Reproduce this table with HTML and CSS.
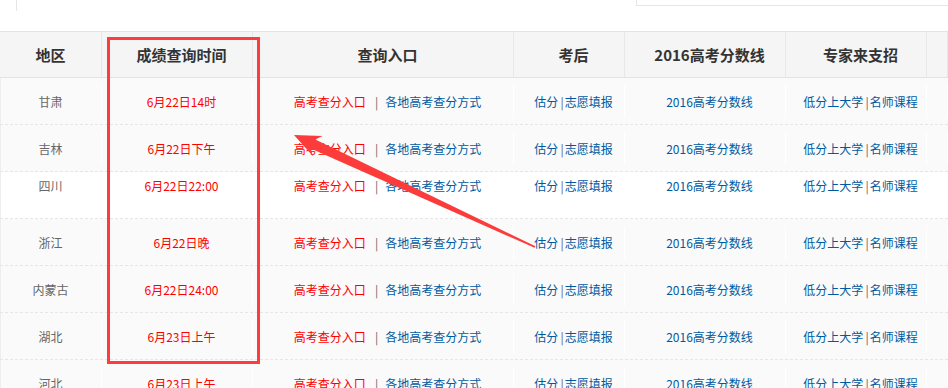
FILE: index.html
```html
<!DOCTYPE html>
<html lang="zh-CN">
<head>
<meta charset="utf-8">
<title>高考成绩查询时间</title>
<link rel="stylesheet" href="styles.css">
</head>
<body>
<div class="page">
  <div class="topbar">
    <span class="edge edge-left"></span>
    <span class="edge edge-right"></span>
  </div>

  <div class="score-table">
    <div class="row head">
      <div class="cell">地区</div>
      <div class="cell">成绩查询时间</div>
      <div class="cell">查询入口</div>
      <div class="cell">考后</div>
      <div class="cell">2016高考分数线</div>
      <div class="cell">专家来支招</div>
      <div class="cell"></div>
    </div>

    <div class="row boxed">
      <div class="cell"><div class="in area">甘肃</div></div>
      <div class="cell"><div class="in red">6月22日14时</div></div>
      <div class="cell"><div class="in"><a class="red">高考查分入口</a><span class="sep wide">|</span><a>各地高考查分方式</a></div></div>
      <div class="cell"><div class="in"><a>估分</a><span class="sep">|</span><a>志愿填报</a></div></div>
      <div class="cell"><div class="in"><a>2016高考分数线</a></div></div>
      <div class="cell"><div class="in"><a>低分上大学</a><span class="sep">|</span><a>名师课程</a></div></div>
      <div class="cell"><div class="in"></div></div>
    </div>

    <div class="row boxed">
      <div class="cell"><div class="in area">吉林</div></div>
      <div class="cell"><div class="in red">6月22日下午</div></div>
      <div class="cell"><div class="in"><a class="red">高考查分入口</a><span class="sep wide">|</span><a>各地高考查分方式</a></div></div>
      <div class="cell"><div class="in"><a>估分</a><span class="sep">|</span><a>志愿填报</a></div></div>
      <div class="cell"><div class="in"><a>2016高考分数线</a></div></div>
      <div class="cell"><div class="in"><a>低分上大学</a><span class="sep">|</span><a>名师课程</a></div></div>
      <div class="cell"><div class="in"></div></div>
    </div>

    <div class="row plain">
      <div class="cell"><div class="in area">四川</div></div>
      <div class="cell"><div class="in red">6月22日22:00</div></div>
      <div class="cell"><div class="in"><a class="red">高考查分入口</a><span class="sep wide">|</span><a>各地高考查分方式</a></div></div>
      <div class="cell"><div class="in"><a>估分</a><span class="sep">|</span><a>志愿填报</a></div></div>
      <div class="cell"><div class="in"><a>2016高考分数线</a></div></div>
      <div class="cell"><div class="in"><a>低分上大学</a><span class="sep">|</span><a>名师课程</a></div></div>
      <div class="cell"><div class="in"></div></div>
    </div>

    <div class="row boxed">
      <div class="cell"><div class="in area">浙江</div></div>
      <div class="cell"><div class="in red">6月22日晚</div></div>
      <div class="cell"><div class="in"><a class="red">高考查分入口</a><span class="sep wide">|</span><a>各地高考查分方式</a></div></div>
      <div class="cell"><div class="in"><a>估分</a><span class="sep">|</span><a>志愿填报</a></div></div>
      <div class="cell"><div class="in"><a>2016高考分数线</a></div></div>
      <div class="cell"><div class="in"><a>低分上大学</a><span class="sep">|</span><a>名师课程</a></div></div>
      <div class="cell"><div class="in"></div></div>
    </div>

    <div class="row boxed">
      <div class="cell"><div class="in area">内蒙古</div></div>
      <div class="cell"><div class="in red">6月22日24:00</div></div>
      <div class="cell"><div class="in"><a class="red">高考查分入口</a><span class="sep wide">|</span><a>各地高考查分方式</a></div></div>
      <div class="cell"><div class="in"><a>估分</a><span class="sep">|</span><a>志愿填报</a></div></div>
      <div class="cell"><div class="in"><a>2016高考分数线</a></div></div>
      <div class="cell"><div class="in"><a>低分上大学</a><span class="sep">|</span><a>名师课程</a></div></div>
      <div class="cell"><div class="in"></div></div>
    </div>

    <div class="row boxed">
      <div class="cell"><div class="in area">湖北</div></div>
      <div class="cell"><div class="in red">6月23日上午</div></div>
      <div class="cell"><div class="in"><a class="red">高考查分入口</a><span class="sep wide">|</span><a>各地高考查分方式</a></div></div>
      <div class="cell"><div class="in"><a>估分</a><span class="sep">|</span><a>志愿填报</a></div></div>
      <div class="cell"><div class="in"><a>2016高考分数线</a></div></div>
      <div class="cell"><div class="in"><a>低分上大学</a><span class="sep">|</span><a>名师课程</a></div></div>
      <div class="cell"><div class="in"></div></div>
    </div>

    <div class="row boxed">
      <div class="cell"><div class="in area">河北</div></div>
      <div class="cell"><div class="in red">6月23日上午</div></div>
      <div class="cell"><div class="in"><a class="red">高考查分入口</a><span class="sep wide">|</span><a>各地高考查分方式</a></div></div>
      <div class="cell"><div class="in"><a>估分</a><span class="sep">|</span><a>志愿填报</a></div></div>
      <div class="cell"><div class="in"><a>2016高考分数线</a></div></div>
      <div class="cell"><div class="in"><a>低分上大学</a><span class="sep">|</span><a>名师课程</a></div></div>
      <div class="cell"><div class="in"></div></div>
    </div>
  </div>

  <!-- annotation: frame around the time column and a pointer arrow -->
  <div class="highlight"></div>
  <svg class="arrow" width="948" height="388" viewBox="0 0 948 388" aria-hidden="true">
    <polygon points="294,135 322.5,136 315.3,139.4 535.4,246.2 534.6,247.8 310.8,148.5 313,156.2"/>
  </svg>
</div>
</body>
</html>
```

FILE: styles.css
```css
html, body {
  margin: 0;
  padding: 0;
  overflow: hidden;
  background: #fff;
}

.page {
  position: relative;
  width: 948px;
  height: 388px;
  overflow: hidden;
  font-family: "Noto Sans CJK SC", "Liberation Sans", sans-serif;
  font-size: 12px;
  line-height: 14px;
}

/* bottom edges of the search boxes above the table */
.topbar {
  height: 31px;
  display: flex;
  justify-content: space-between;
  align-items: flex-start;
  padding-left: 16px;
}

.edge-left {
  width: 0;
  height: 11px;
  border-left: 1px solid #e6e6e6;
}

.edge-right {
  width: 311px;
  height: 5px;
  border-left: 1px solid #e6e6e6;
  border-bottom: 1px solid #e6e6e6;
}

/* table */
.score-table {
  width: 948px;
}

.row {
  display: grid;
  grid-template-columns: 102px 151px 261px 111px 161px 141px 1fr;
  box-sizing: border-box;
}

.head {
  height: 47px;
  background: #f5f5f5;
  border-top: 1px solid #e3e3e3;
  border-bottom: 1px solid #e3e3e3;
}

.head .cell {
  display: flex;
  align-items: center;
  justify-content: center;
  border-right: 1px solid #e8e8e8;
  font-size: 15px;
  font-weight: bold;
  color: #333;
}

.head .cell + .cell {
  padding-left: 9px;
}

.row.boxed,
.row.plain {
  height: 47px;
  border-bottom: 1px dashed #e6e6e6;
}

.row.boxed {
  background: #fafafa;
}

.row.plain {
  background: #fff;
}

.boxed .cell {
  padding: 7px 0 6px;
}

.plain .cell {
  padding-top: 7px;
}

.boxed .cell:first-child,
.plain .cell:first-child {
  box-shadow: inset 1px 0 0 #eee;
}

.in {
  height: 100%;
  box-sizing: border-box;
  display: flex;
  align-items: center;
  justify-content: center;
  border-right: 1px solid #fff;
  white-space: nowrap;
}

.plain .in {
  align-items: flex-start;
  height: auto;
}

.cell + .cell .in {
  padding-left: 9px;
}

.area {
  color: #666;
}

a {
  color: #005aa0;
  text-decoration: none;
}

.red,
a.red {
  color: #f00;
}

.sep {
  color: #666;
  margin: 0 1px 0 2px;
}

.sep.wide {
  margin: 0 7px 0 9px;
}

/* annotation overlay */
.highlight {
  position: absolute;
  left: 107px;
  top: 37px;
  width: 153px;
  height: 327px;
  box-sizing: border-box;
  border: 3px solid #fd3d3d;
}

.arrow {
  position: absolute;
  left: 0;
  top: 0;
}

.arrow polygon {
  fill: #fc3b3b;
}
```
